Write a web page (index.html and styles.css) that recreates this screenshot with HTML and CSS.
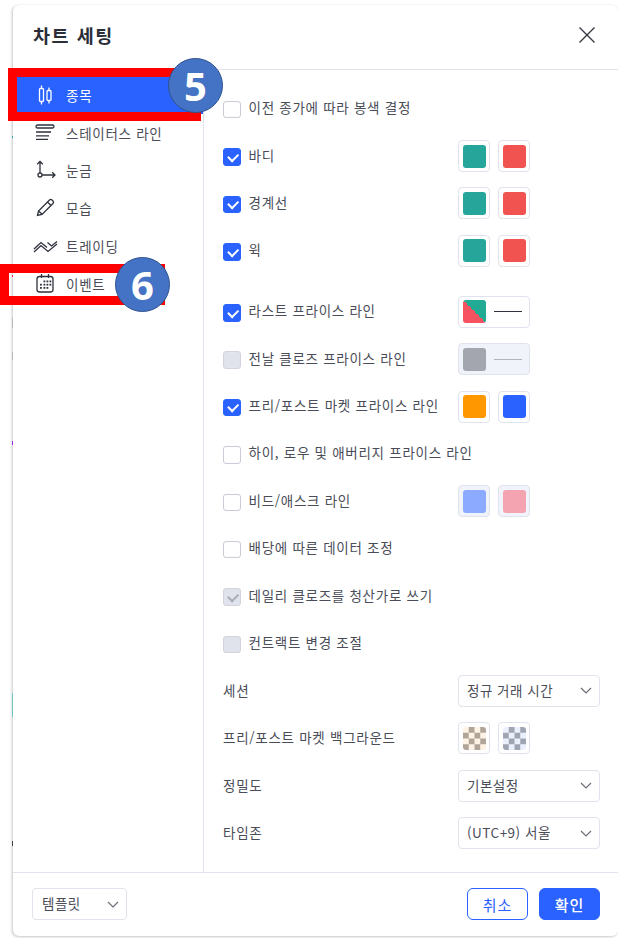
FILE: index.html
```html
<!DOCTYPE html>
<html lang="ko">
<head>
<meta charset="utf-8">
<title>차트 세팅</title>
<link rel="stylesheet" href="styles.css">
</head>
<body>
<div class="sliver s1"></div><div class="sliver s2"></div><div class="sliver s3"></div><div class="sliver s4"></div><div class="sliver s5"></div><div class="sliver s6"></div><div class="sliver s7"></div>
<div class="dialog">
  <header class="head">
    <h1 class="title">차트 세팅</h1>
    <svg class="close" width="18" height="18" viewBox="0 0 18 18"><path d="M1.5 1.5l15 15M16.5 1.5l-15 15" fill="none" stroke="#363a45" stroke-width="1.4"/></svg>
  </header>
  <div class="body">
    <nav class="nav">
      <a class="nav-item active"><svg width="28" height="28" viewBox="0 0 28 28" fill="none" stroke="currentColor" stroke-width="1.3"><rect x="8.500" y="7.500" width="4" height="13" rx="1"/><path d="M10.500 4.500v3M10.500 20.500v3"/><rect x="16" y="9.500" width="4" height="10" rx="1"/><path d="M18 6.500v3M18 19.500v3"/></svg><span>종목</span></a>
      <a class="nav-item"><svg width="28" height="28" viewBox="0 0 28 28" fill="none" stroke="currentColor" stroke-width="1.3"><rect x="5" y="6" width="18" height="3" rx="1.500"/><path d="M5 13h15M5 16.800h13M5 20.300h12"/></svg><span>스테이터스 라인</span></a>
      <a class="nav-item"><svg width="28" height="28" viewBox="0 0 28 28" fill="none" stroke="currentColor" stroke-width="1.3"><path d="M9 17V5.500M6.200 8.300L9 5.500l2.800 2.800M11 19h13M21.200 16.200L24 19l-2.800 2.800"/><circle cx="9" cy="19" r="2"/></svg><span>눈금</span></a>
      <a class="nav-item"><svg width="28" height="28" viewBox="0 0 28 28" fill="none" stroke="currentColor" stroke-width="1.3"><path d="M6.500 21.500l1-4.500L18.500 6a1.800 1.800 0 0 1 2.500 0l1 1a1.800 1.800 0 0 1 0 2.500L11 20.500zM7.500 17l4 3.500M16.500 8l3.500 3.500"/></svg><span>모습</span></a>
      <a class="nav-item"><svg width="28" height="28" viewBox="0 0 28 28" fill="none" stroke="currentColor" stroke-width="1.3"><path d="M3 20l7-6.500 7 6 9-7.500M3 17l7-6.500 6 5M16.500 10.500l4 3.500 5.500-4.500"/></svg><span>트레이딩</span></a>
      <a class="nav-item"><svg width="28" height="28" viewBox="0 0 28 28" fill="none" stroke="currentColor" stroke-width="1.3"><rect x="6" y="6.500" width="16" height="15.500" rx="2.500"/><path d="M10.500 4v4M17.500 4v4"/><g fill="currentColor" stroke="none"><rect x="12.500" y="10.500" width="1.800" height="1.800"/><rect x="15.500" y="10.500" width="1.800" height="1.800"/><rect x="18.500" y="10.500" width="1.800" height="1.800"/><rect x="9" y="13.800" width="1.800" height="1.800"/><rect x="12.500" y="13.800" width="1.800" height="1.800"/><rect x="15.500" y="13.800" width="1.800" height="1.800"/><rect x="18.500" y="13.800" width="1.800" height="1.800"/><rect x="9" y="17" width="1.800" height="1.800"/><rect x="12.500" y="17" width="1.800" height="1.800"/><rect x="15.500" y="17" width="1.800" height="1.800"/></g></svg><span>이벤트</span></a>
    </nav>
    <main class="content">
      <div class="row"><label class="check-label"><i class="cb"></i>이전 종가에 따라 봉색 결정</label></div>
      <div class="row"><label class="check-label"><i class="cb on"></i>바디</label><div class="swatches"><b class="sw"><i class="teal"></i></b><b class="sw"><i class="red"></i></b></div></div>
      <div class="row"><label class="check-label"><i class="cb on"></i>경계선</label><div class="swatches"><b class="sw"><i class="teal"></i></b><b class="sw"><i class="red"></i></b></div></div>
      <div class="row"><label class="check-label"><i class="cb on"></i>윅</label><div class="swatches"><b class="sw"><i class="teal"></i></b><b class="sw"><i class="red"></i></b></div></div>
      <div class="row spaced"><label class="check-label"><i class="cb on"></i>라스트 프라이스 라인</label><div class="swatches"><b class="sw wide"><i class="split"></i><u class="line"></u></b></div></div>
      <div class="row"><label class="check-label"><i class="cb off"></i>전날 클로즈 프라이스 라인</label><div class="swatches"><b class="sw wide dis"><i class="gray"></i><u class="line thin"></u></b></div></div>
      <div class="row"><label class="check-label"><i class="cb on"></i>프리/포스트 마켓 프라이스 라인</label><div class="swatches"><b class="sw"><i class="orange"></i></b><b class="sw"><i class="blue"></i></b></div></div>
      <div class="row"><label class="check-label"><i class="cb"></i>하이, 로우 및 애버리지 프라이스 라인</label></div>
      <div class="row"><label class="check-label"><i class="cb"></i>비드/애스크 라인</label><div class="swatches"><b class="sw dis"><i class="lblue"></i></b><b class="sw dis"><i class="pink"></i></b></div></div>
      <div class="row"><label class="check-label"><i class="cb"></i>배당에 따른 데이터 조정</label></div>
      <div class="row"><label class="check-label"><i class="cb off tick"></i>데일리 클로즈를 청산가로 쓰기</label></div>
      <div class="row"><label class="check-label"><i class="cb off"></i>컨트랙트 변경 조절</label></div>
      <div class="row"><span class="plain">세션</span><div class="select"><span>정규 거래 시간</span><svg class="chev" width="12" height="7" viewBox="0 0 12 7"><path d="M1 1l5 5 5-5" fill="none" stroke="#6a6d78" stroke-width="1.200"/></svg></div></div>
      <div class="row"><span class="plain">프리/포스트 마켓 백그라운드</span><div class="swatches"><b class="sw"><i class="chk warm"></i></b><b class="sw"><i class="chk cool"></i></b></div></div>
      <div class="row"><span class="plain">정밀도</span><div class="select"><span>기본설정</span><svg class="chev" width="12" height="7" viewBox="0 0 12 7"><path d="M1 1l5 5 5-5" fill="none" stroke="#6a6d78" stroke-width="1.200"/></svg></div></div>
      <div class="row"><span class="plain">타임존</span><div class="select"><span>(UTC+9) 서울</span><svg class="chev" width="12" height="7" viewBox="0 0 12 7"><path d="M1 1l5 5 5-5" fill="none" stroke="#6a6d78" stroke-width="1.200"/></svg></div></div>
    </main>
  </div>
  <footer class="foot">
    <div class="select template"><span>템플릿</span><svg class="chev" width="12" height="7" viewBox="0 0 12 7"><path d="M1 1l5 5 5-5" fill="none" stroke="#6a6d78" stroke-width="1.200"/></svg></div>
    <div class="actions"><button class="btn ghost">취소</button><button class="btn primary">확인</button></div>
  </footer>
</div>
<div class="mark mark-5"></div>
<div class="mark mark-6"></div>
<div class="badge badge-5">5</div>
<div class="badge badge-6">6</div>
</body>
</html>
```
FILE: styles.css
```css
* { box-sizing: border-box; }
html, body { margin: 0; height: 100%; background: #fff; overflow: hidden; }
body {
  position: relative;
  padding: 5px 0 0 13px;
  font-family: "Noto Sans CJK KR", "Noto Sans", sans-serif;
  color: #4a4d58;
  font-size: 13.5px;
  letter-spacing: 0.72px;
}
.dialog {
  width: 605px;
  height: 931px;
  background: #fff;
  border-radius: 6px;
  box-shadow: -1px 1px 3px rgba(0,0,0,.22), 0 0 1px rgba(0,0,0,.1);
  display: flex;
  flex-direction: column;
}
.head {
  height: 65px;
  flex: none;
  border-bottom: 1px solid #e0e3eb;
  display: flex;
  align-items: center;
  justify-content: space-between;
  padding: 0 22px 5px 20px;
}
.title { margin: 0; font-size: 18.5px; font-weight: 700; color: #2a2e39; letter-spacing: 1.5px; }
.body { flex: 1; display: flex; min-height: 0; }
.nav {
  width: 191px;
  flex: none;
  border-right: 1px solid #e0e3eb;
  padding-top: 6px;
}
.nav-item {
  display: flex;
  align-items: center;
  gap: 7px;
  height: 37.800px;
  padding-left: 18px;
}
.nav-item svg { flex: none; color: #2f323c; }
.nav-item.active { background: #2962ff; color: #fff; }
.nav-item.active svg { color: #fff; }
.content { flex: 1; padding: 15px 18px 0 19px; }
.row {
  height: 47.400px;
  display: flex;
  align-items: center;
  justify-content: space-between;
}
.row.spaced { margin-top: 13.500px; }
.check-label { display: flex; align-items: center; gap: 8px; padding-bottom: 3px; }
.plain { padding-bottom: 2px; }
.cb {
  position: relative;
  top: 2.500px;
  width: 17.500px;
  height: 17.500px;
  border: 1px solid #c9ccd5;
  border-radius: 3px;
  background: #fff;
  flex: none;
}
.cb.on { background: #2962ff; border-color: #2962ff; }
.cb.on::after, .cb.tick::after {
  content: "";
  position: absolute;
  left: 3.800px;
  top: 3.500px;
  width: 8px;
  height: 4.500px;
  border-left: 2px solid #fff;
  border-bottom: 2px solid #fff;
  transform: rotate(-45deg);
}
.cb.off { background: #e0e3eb; border-color: #d1d4dc; }
.cb.tick::after { border-color: #a8abb5; }
.swatches { display: flex; gap: 8px; width: 142px; }
.sw {
  width: 32px;
  height: 32px;
  border: 1px solid #e0e3eb;
  border-radius: 4px;
  background: #fff;
  padding: 3.500px;
  display: flex;
  align-items: center;
}
.sw i { display: block; width: 23px; height: 23px; border-radius: 3px; flex: none; }
.sw.wide { width: 72px; }
.sw.dis { background: #f0f3fa; }
.line { display: block; height: 1px; background: #2f323c; width: 28px; margin-left: 8px; }
.line.thin { background: #b2b5be; }
.teal { background: #26a69a; }
.red { background: #f05350; }
.split { background: linear-gradient(45deg, #f7525f 50%, #22ab94 50%); }
.gray { background: #a3a6af; }
.orange { background: #ff9800; }
.blue { background: #2962ff; }
.lblue { background: #8caaff; }
.pink { background: #f4a3b1; }
.chk { background-size: 11.500px 11.500px; }
.warm { background-color: #fff3e5; background-image: conic-gradient(#b0a598 25%, transparent 0 50%, #b0a598 0 75%, transparent 0); }
.cool { background-color: #ecf0fc; background-image: conic-gradient(#a0a5b4 25%, transparent 0 50%, #a0a5b4 0 75%, transparent 0); }
.select {
  width: 142px;
  height: 32px;
  border: 1px solid #e0e3eb;
  border-radius: 4px;
  display: flex;
  align-items: center;
  justify-content: space-between;
  padding: 0 7px 0 8px;
  background: #fff;
  letter-spacing: 0.5px;
}
.select span { padding-bottom: 2px; }
.template { width: 95px; padding-left: 9px; }
.foot {
  height: 64px;
  flex: none;
  border-top: 1px solid #e0e3eb;
  display: flex;
  align-items: center;
  justify-content: space-between;
  padding: 0 18px 1px 19px;
}
.actions { display: flex; gap: 11px; }
.btn {
  width: 61px;
  height: 32px;
  border-radius: 6px;
  font: inherit;
  font-size: 15px;
  letter-spacing: 1px;
  padding: 0;
}
.ghost { background: #fff; border: 1px solid #2962ff; color: #2962ff; }
.primary { background: #2962ff; border: 1px solid #2962ff; color: #fff; font-weight: 500; }
.mark { position: absolute; border: 9px solid #ff0000; }
.mark-5 { left: 8px; top: 68px; width: 193px; height: 53px; }
.mark-6 { left: 0; top: 264px; width: 165px; height: 41px; }
.badge {
  position: absolute;
  width: 55px;
  height: 55px;
  border-radius: 50%;
  background: #4472c4;
  border: 1.500px solid #2f528f;
  color: #fff;
  font-family: "Open Sans", sans-serif;
  font-weight: 700;
  font-size: 40px;
  letter-spacing: 0;
  display: flex;
  align-items: center;
  justify-content: center;
}
.badge-5 { left: 168px; top: 58px; }
.badge-6 { left: 115px; top: 257px; }
.sliver { position: absolute; left: 12px; width: 1px; }
.s1 { top: 136px; height: 2px; background: #26a69a; }
.s2 { top: 275px; height: 2px; background: #e91e63; }
.s3 { top: 318px; height: 10px; background: #bbb; }
.s4 { top: 352px; height: 8px; background: #bbb; }
.s5 { top: 441px; height: 4px; background: #9c27f0; }
.s6 { top: 693px; height: 24px; background: #6fc4bd; }
.s7 { top: 841px; height: 5px; background: #444; }
```
